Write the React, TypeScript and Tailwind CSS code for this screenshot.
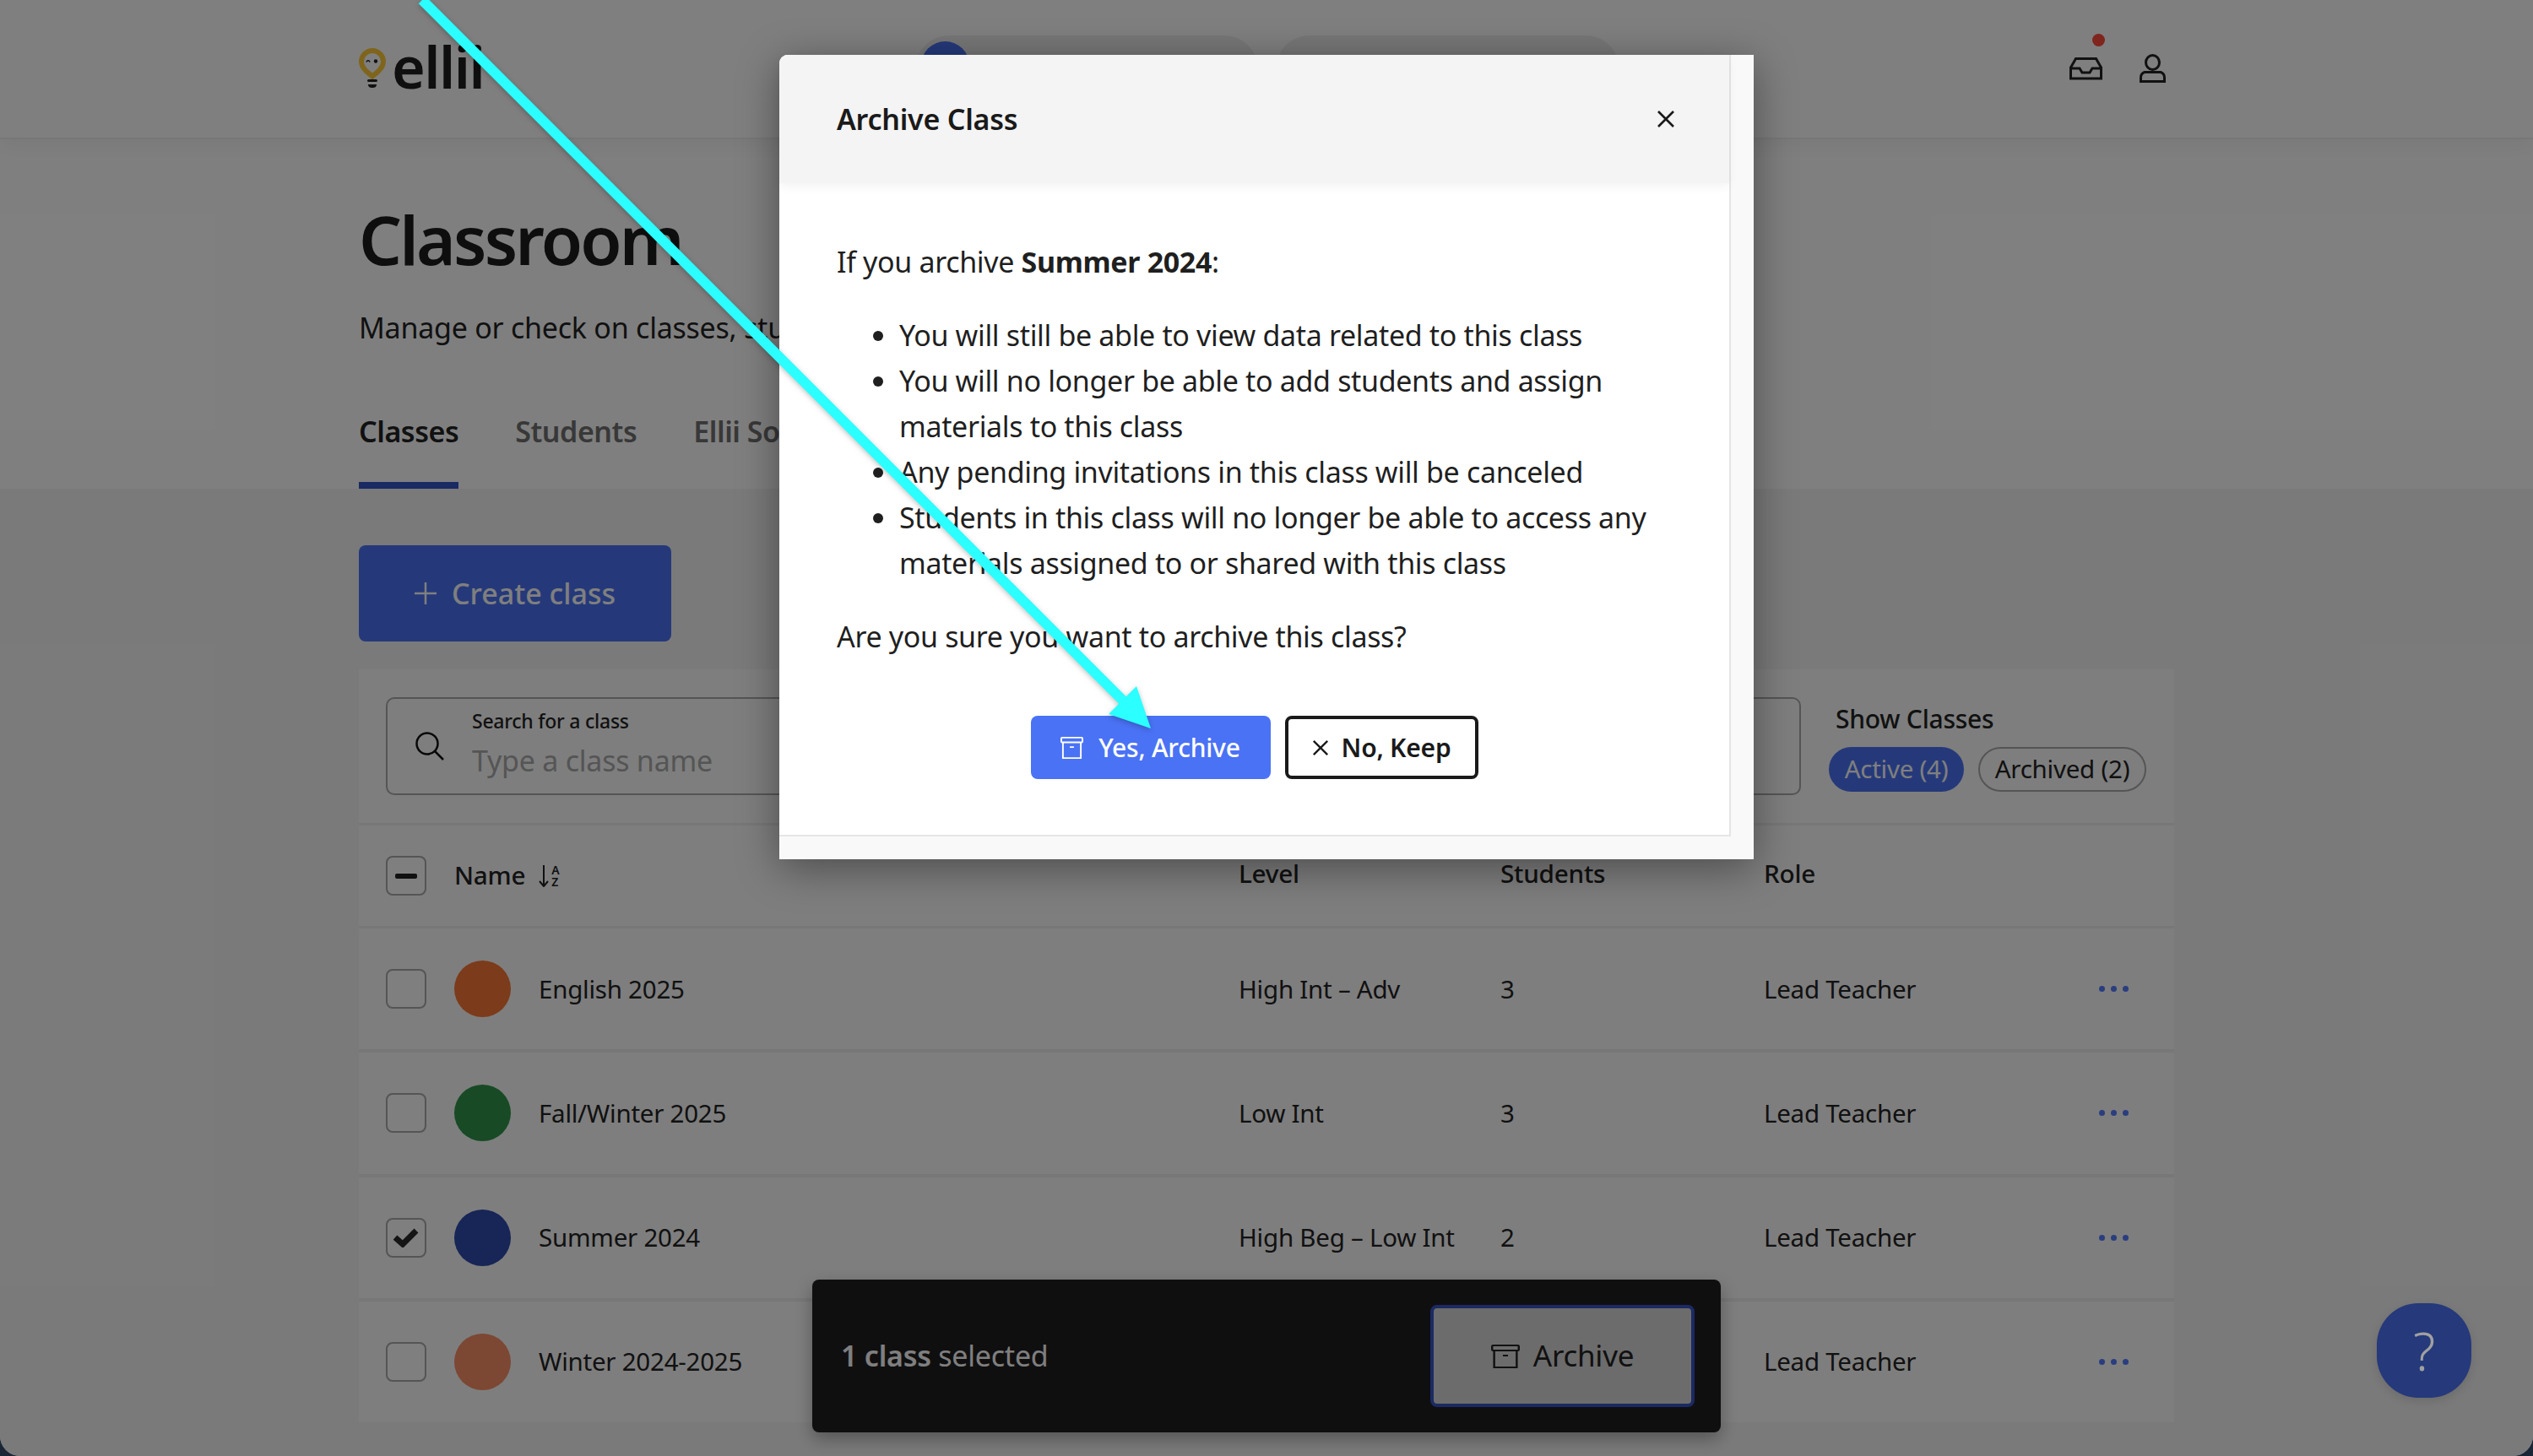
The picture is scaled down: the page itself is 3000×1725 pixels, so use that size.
import React from 'react';

const classes = [
  { name: 'English 2025', level: 'High Int – Adv', students: 3, color: 'bg-[#f87634]', checked: false },
  { name: 'Fall/Winter 2025', level: 'Low Int', students: 3, color: 'bg-[#2e944a]', checked: false },
  { name: 'Summer 2024', level: 'High Beg – Low Int', students: 2, color: 'bg-[#2e4aae]', checked: true },
  { name: 'Winter 2024-2025', level: '', students: null, color: 'bg-[#f88e66]', checked: false },
];

const ArchiveIcon = ({ className }: { className: string }) => (
  <svg viewBox="0 0 28 28" fill="none" stroke="currentColor" strokeWidth="2" className={className} preserveAspectRatio="none">
    <rect x="1" y="1" width="26" height="6" rx="1" />
    <path d="M3 7v20h22V7M11.500 13h5" />
  </svg>
);

const CloseIcon = ({ className }: { className: string }) => (
  <svg viewBox="0 0 22 22" fill="none" stroke="currentColor" strokeWidth="2.600" className={className}>
    <path d="M2 2l18 18M20 2L2 20" />
  </svg>
);

const Logo = () => (
  <div className="flex items-end h-[48px] w-[145px] gap-[7px]">
    <svg viewBox="0 0 32 48" className="w-[32px] h-[48px] shrink-0">
      <path d="M16 3C8.800 3 3 8.800 3 16c0 5 2.500 8 5.500 11L16 33.500 23.500 27c3-3 5.500-6 5.500-11 0-7.200-5.800-13-13-13z" fill="none" stroke="#ffca38" strokeWidth="6" />
      <path d="M9 16.500c.8-2.400 3.200-2.400 4 0" fill="none" stroke="#222" strokeWidth="1.600" />
      <circle cx="20" cy="15.500" r="2.200" fill="#222" />
      <rect x="10" y="37" width="12" height="3" rx="1.500" fill="#222" />
      <path d="M11 43h10c0 3-2 4-5 4s-5-1-5-4z" fill="#222" />
    </svg>
    <span className="text-[68px] leading-[48px] font-semibold text-[#1f1f1f] tracking-[-1.500px] h-[48px] flex items-end pb-[2px]">ellii</span>
  </div>
);

const Checkbox = ({ checked, minus }: { checked?: boolean; minus?: boolean }) => (
  <div className="w-[48px] h-[47px] rounded-[8px] border-[2.500px] border-[#aaaaaa] bg-white flex items-center justify-center shrink-0">
    {minus && <div className="w-[26px] h-[6px] rounded-[2px] bg-[#222]" />}
    {checked && (
      <svg viewBox="0 0 30 24" className="w-[30px] h-[24px]" fill="none" stroke="#2a2a2a" strokeWidth="7">
        <path d="M2 12l9 8L27 4" />
      </svg>
    )}
  </div>
);

export default function App() {
  return (
    <div className="w-[3000px] h-[1725px] bg-[#1a2636] relative overflow-hidden font-['Noto_Sans',sans-serif] text-[#222] tracking-[-0.240px]">
      {/* Page behind the dialog */}
      <div className="h-full bg-[#f5f5f5] rounded-b-[24px] overflow-hidden">
        <header className="h-[165px] bg-white border-b-2 border-[#eeeeee] relative z-10 shadow-[0_8px_24px_rgba(0,0,0,0.05)]">
          <div className="w-[2150px] mx-auto h-full flex items-start">
            <div className="mt-[57px]">
              <Logo />
            </div>
            <nav className="flex gap-[21px] ml-[514px] mt-[42px]">
              <div className="w-[406px] h-[80px] rounded-[40px] bg-[#eeeeee] pl-[7px] pt-[7px]">
                <div className="w-[57px] h-[57px] rounded-full bg-[#4a72f5]" />
              </div>
              <div className="w-[407px] h-[80px] rounded-[40px] bg-[#eeeeee]" />
            </nav>
            <div className="ml-auto mr-[10px] flex items-start gap-[44px] mt-[40px]">
              <div className="relative pt-[28px]">
                <svg viewBox="0 0 39 27" className="w-[39px] h-[27px]" fill="none" stroke="#222" strokeWidth="3">
                  <path d="M1.500 11v14h36V11M1.500 12l6-10.500h24l6 10.500M1.500 13H12l3 5h9l3-5h10.500" />
                </svg>
                <span className="absolute top-0 right-[-3px] w-[15px] h-[15px] rounded-full bg-[#ff4a3d]" />
              </div>
              <svg viewBox="0 0 31 34" className="w-[31px] h-[34px] mt-[24px]" fill="none" stroke="#222" strokeWidth="3">
                <ellipse cx="15.500" cy="10" rx="8" ry="8.500" />
                <path d="M6 21.500h19c3 1 4.500 4 4.500 6.500v4.500h-28V28c0-2.500 1.500-5.500 4.500-6.500z" />
              </svg>
            </div>
          </div>
        </header>

        <section className="bg-white h-[414px]">
          <div className="w-[2150px] mx-auto pt-[68px]">
            <h1 className="text-[80px] leading-[100px] font-semibold text-[#1c1c1c] tracking-[-2.800px]">Classroom</h1>
            <p className="mt-[30px] text-[34px] leading-[50px]">Manage or check on classes, students and more</p>
            <div className="mt-[73px] flex gap-[67px] text-[34px] leading-[50px] font-semibold tracking-[-0.450px]">
              <div className="pb-[35px] border-b-[8px] border-[#3554c6] text-[#222]">Classes</div>
              <div className="text-[#707070]">Students</div>
              <div className="text-[#707070]">Ellii Solo</div>
            </div>
          </div>
        </section>

        <main className="w-[2150px] mx-auto">
          <button className="mt-[67px] w-[370px] h-[114px] rounded-[8px] bg-[#4a72f5] text-white text-[34px] font-medium tracking-normal flex items-center justify-center gap-[18px]">
            <svg viewBox="0 0 26 26" className="w-[26px] h-[26px]" fill="none" stroke="currentColor" strokeWidth="2.500">
              <path d="M13 0v26M0 13h26" />
            </svg>
            Create class
          </button>

          <div className="mt-[33px] bg-[#eeeeee]">
            <div className="h-[182px] bg-[#fcfcfc] pl-[32px] pr-[33px] flex items-center">
              <div className="w-[1676px] h-[116px] rounded-[10px] border-[2.500px] border-[#aaaaaa] flex items-center pl-[33px]">
                <svg viewBox="0 0 34 34" className="w-[34px] h-[34px]" fill="none" stroke="#111" strokeWidth="2.500">
                  <circle cx="14" cy="14" r="12.500" />
                  <path d="M23 23l10 10" />
                </svg>
                <div className="ml-[33px] mt-[-5px]">
                  <div className="text-[23px] leading-[32px] font-medium">Search for a class</div>
                  <div className="text-[34px] leading-[48px] text-[#aaaaaa] mt-[7px]">Type a class name</div>
                </div>
              </div>
              <div className="ml-[33px] flex-1 pt-[2px]">
                <div className="text-[30px] leading-[40px] font-medium pl-[8px]">Show Classes</div>
                <div className="flex gap-[17px] mt-[13px] text-[29.500px]">
                  <div className="w-[160px] h-[53px] rounded-full bg-[#4a72f5] text-white flex items-center justify-center">Active (4)</div>
                  <div className="w-[199px] h-[53px] rounded-full border-[2.500px] border-[#aaaaaa] flex items-center justify-center">Archived (2)</div>
                </div>
              </div>
            </div>

            <div className="mt-[3px] h-[119px] bg-[#fcfcfc] pl-[32px] grid grid-cols-[1010px_310px_312px_1fr] items-center text-[29.700px] font-medium">
              <div className="flex items-center">
                <Checkbox minus />
                <span className="ml-[33px]">Name</span>
                <span className="ml-[16px] flex items-center">
                  <svg viewBox="0 0 12 26" className="w-[12px] h-[26px]" fill="none" stroke="#222" strokeWidth="2">
                    <path d="M6 0v25M1 19l5 6 5-6" />
                  </svg>
                  <span className="flex flex-col text-[14px] leading-[14px] ml-[3px] font-semibold">
                    <span>A</span>
                    <span>Z</span>
                  </span>
                </span>
              </div>
              <div className="mt-[-4px]">Level</div>
              <div className="mt-[-4px]">Students</div>
              <div className="mt-[-4px]">Role</div>
            </div>

            <div className="mt-[3px] flex flex-col gap-[4px]">
              {classes.map((c) => (
                <div key={c.name} className="h-[143.250px] bg-[#fcfcfc] pl-[32px] grid grid-cols-[1010px_310px_312px_1fr] items-center text-[29.500px]">
                  <div className="flex items-center">
                    <Checkbox checked={c.checked} />
                    <div className={`ml-[33px] w-[67px] h-[67px] rounded-full ${c.color}`} />
                    <span className="ml-[33px]">{c.name}</span>
                  </div>
                  <div>{c.level}</div>
                  <div>{c.students}</div>
                  <div className="flex items-center justify-between pr-[54px]">
                    <span>Lead Teacher</span>
                    <span className="flex gap-[7px]">
                      <span className="w-[7px] h-[7px] rounded-full bg-[#547bff]" />
                      <span className="w-[7px] h-[7px] rounded-full bg-[#547bff]" />
                      <span className="w-[7px] h-[7px] rounded-full bg-[#547bff]" />
                    </span>
                  </div>
                </div>
              ))}
            </div>
          </div>
        </main>

        {/* Selection bar */}
        <div className="absolute z-20 left-[962px] top-[1516px] w-[1076px] h-[181px] rounded-[8px] bg-[#211f21] shadow-[0_8px_20px_rgba(0,0,0,0.3)] flex items-center justify-between pl-[34px] pr-[31px]">
          <div className="text-[34px] text-white">
            <span className="font-semibold">1 class</span> selected
          </div>
          <button className="w-[313px] h-[121px] rounded-[8px] bg-[#d8d8d8] border-[4px] border-[#3654c6] flex items-center justify-center gap-[16px] text-[35px]">
            <ArchiveIcon className="w-[34px] h-[28px]" />
            Archive
          </button>
        </div>
      </div>

      {/* Dim layer */}
      <div className="absolute inset-0 z-30 bg-black/50 rounded-b-[24px]" />

      <button className="absolute z-30 left-[2815px] top-[1544px] w-[112px] h-[112px] rounded-[44%] bg-[#25397b] text-[#a0a0a0] text-[62px] font-light flex items-center justify-center shadow-[0_4px_12px_rgba(0,0,0,0.12)]">
        ?
      </button>

      {/* Dialog */}
      <div className="absolute z-40 left-[923px] top-[65px] w-[1154px] h-[953px] bg-[#f9f9f9] rounded-tl-[10px] shadow-[0_10px_50px_rgba(0,0,0,0.4)]">
        <div className="w-[1127px] h-[926px] bg-white border-r-2 border-b-2 border-[#e5e5e5] rounded-tl-[10px]">
          <div className="h-[152px] bg-[#f4f4f4] rounded-tl-[10px] pl-[68px] pr-[64px] flex items-center justify-between shadow-[0_4px_12px_rgba(0,0,0,0.05)]">
            <h2 className="text-[34px] font-semibold text-[#1a1a1a]">Archive Class</h2>
            <CloseIcon className="w-[22px] h-[22px] text-[#1a1a1a]" />
          </div>
          <div className="pl-[68px] pr-[68px] pt-[66px] text-[34px] leading-[54px] text-[#1f1f1f] tracking-[-0.340px]">
            <p>
              If you archive <strong className="font-bold">Summer 2024</strong>:
            </p>
            <ul className="mt-[33px] pl-[74px] list-disc">
              <li>You will still be able to view data related to this class</li>
              <li>You will no longer be able to add students and assign materials to this class</li>
              <li>Any pending invitations in this class will be canceled</li>
              <li>Students in this class will no longer be able to access any materials assigned to or shared with this class</li>
            </ul>
            <p className="mt-[33px]">Are you sure you want to archive this class?</p>
            <div className="mt-[67px] ml-[-68px] mr-[-68px] flex justify-center gap-[17px] text-[30px] tracking-[-0.240px]">
              <button className="w-[284px] h-[75px] rounded-[8px] bg-[#4a72f5] text-white font-medium flex items-center justify-center gap-[18px]">
                <ArchiveIcon className="w-[27px] h-[26px]" />
                Yes, Archive
              </button>
              <button className="w-[229px] h-[75px] rounded-[8px] border-[4px] border-[#1a1a1a] bg-white text-[#1a1a1a] font-semibold flex items-center justify-center gap-[15px]">
                <CloseIcon className="w-[20px] h-[20px]" />
                No, Keep
              </button>
            </div>
          </div>
        </div>
      </div>

      {/* Annotation arrow drawn over the capture */}
      <svg viewBox="0 0 3000 1725" className="absolute inset-0 z-50 w-[3000px] h-[1725px] pointer-events-none drop-shadow-[0_2px_3px_rgba(0,0,0,0.25)]">
        <path d="M500 0L1338 838" stroke="#2bffff" strokeWidth="12" fill="none" />
        <polygon points="1363,863 1346,813 1313,846" fill="#2bffff" />
      </svg>
    </div>
  );
}
